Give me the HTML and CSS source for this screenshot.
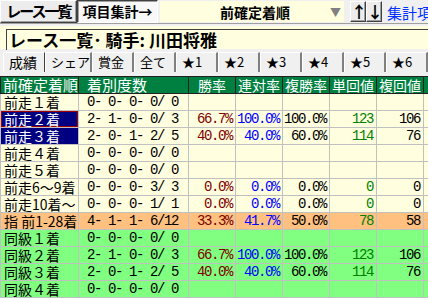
FILE: index.html
```html
<!DOCTYPE html>
<html lang="ja">
<head>
    <meta charset="UTF-8">
    <title>レース一覧・騎手</title>
    <link rel="stylesheet" href="styles.css">
</head>
<body>
    <div class="toolbar">
        <div class="btn btn-list">レース一覧</div>
        <div class="btn btn-sum">項目集計→</div>
        <div class="combo">
            <span class="combo-text">前確定着順</span>
            <span class="combo-arrow">▼</span>
        </div>
        <div class="btn btn-sort btn-up">↑</div>
        <div class="btn btn-sort">↓</div>
        <a class="link" href="#">集計項目設定</a>
    </div>

    <div class="title-panel">
        <div class="title-box">レース一覧･ 騎手: 川田将雅</div>
    </div>

    <div class="tabs">
        <div class="tab active">成績</div>
        <div class="tab">シェア</div>
        <div class="tab">賞金</div>
        <div class="tab">全て</div>
        <div class="tab">★1</div>
        <div class="tab">★2</div>
        <div class="tab">★3</div>
        <div class="tab">★4</div>
        <div class="tab">★5</div>
        <div class="tab">★6</div>
        <div class="tab">★7</div>
    </div>

    <table class="grid">
        <colgroup>
            <col class="c-label">
            <col class="c-count">
            <col class="c-num"><col class="c-num"><col class="c-num"><col class="c-num"><col class="c-num">
            <col class="c-num">
        </colgroup>
        <thead>
            <tr>
                <th class="h-label">前確定着順</th>
                <th class="h-count">着別度数</th>
                <th>勝率</th>
                <th>連対率</th>
                <th>複勝率</th>
                <th>単回値</th>
                <th>複回値</th>
                <th>単勝</th>
            </tr>
        </thead>
        <tbody>
            <tr>
                <td class="label">前走１着</td><td class="count"> 0- 0- 0- 0/ 0</td>
                <td></td><td></td><td></td><td></td><td></td><td></td>
            </tr>
            <tr>
                <td class="label sel focus">前走２着</td><td class="count"> 2- 1- 0- 0/ 3</td>
                <td class="win">66.7%</td><td class="ren">100.0%</td><td class="fuku">100.0%</td><td class="tan">123</td><td class="fkv">106</td><td></td>
            </tr>
            <tr>
                <td class="label sel">前走３着</td><td class="count"> 2- 0- 1- 2/ 5</td>
                <td class="win">40.0%</td><td class="ren">40.0%</td><td class="fuku">60.0%</td><td class="tan">114</td><td class="fkv">76</td><td></td>
            </tr>
            <tr>
                <td class="label">前走４着</td><td class="count"> 0- 0- 0- 0/ 0</td>
                <td></td><td></td><td></td><td></td><td></td><td></td>
            </tr>
            <tr>
                <td class="label">前走５着</td><td class="count"> 0- 0- 0- 0/ 0</td>
                <td></td><td></td><td></td><td></td><td></td><td></td>
            </tr>
            <tr>
                <td class="label">前走6～9着</td><td class="count"> 0- 0- 0- 3/ 3</td>
                <td class="win">0.0%</td><td class="ren">0.0%</td><td class="fuku">0.0%</td><td class="tan">0</td><td class="fkv">0</td><td></td>
            </tr>
            <tr>
                <td class="label">前走10着～</td><td class="count"> 0- 0- 0- 1/ 1</td>
                <td class="win">0.0%</td><td class="ren">0.0%</td><td class="fuku">0.0%</td><td class="tan">0</td><td class="fkv">0</td><td></td>
            </tr>
            <tr class="row-total">
                <td class="label">指 前1-28着</td><td class="count"> 4- 1- 1- 6/12</td>
                <td class="win">33.3%</td><td class="ren">41.7%</td><td class="fuku">50.0%</td><td class="tan">78</td><td class="fkv">58</td><td></td>
            </tr>
            <tr class="row-class">
                <td class="label">同級１着</td><td class="count"> 0- 0- 0- 0/ 0</td>
                <td></td><td></td><td></td><td></td><td></td><td></td>
            </tr>
            <tr class="row-class">
                <td class="label">同級２着</td><td class="count"> 2- 1- 0- 0/ 3</td>
                <td class="win">66.7%</td><td class="ren">100.0%</td><td class="fuku">100.0%</td><td class="tan">123</td><td class="fkv">106</td><td></td>
            </tr>
            <tr class="row-class">
                <td class="label">同級３着</td><td class="count"> 2- 0- 1- 2/ 5</td>
                <td class="win">40.0%</td><td class="ren">40.0%</td><td class="fuku">60.0%</td><td class="tan">114</td><td class="fkv">76</td><td></td>
            </tr>
            <tr class="row-class">
                <td class="label">同級４着</td><td class="count"> 0- 0- 0- 0/ 0</td>
                <td></td><td></td><td></td><td></td><td></td><td></td>
            </tr>
        </tbody>
    </table>
</body>
</html>
```

FILE: styles.css
```css
body {
    margin: 0;
    background-color: #f0f0f0;
    font-family: "Noto Sans CJK JP", sans-serif;
    overflow: hidden;
    width: 428px;
    height: 298px;
}
.toolbar {
    display: flex;
    align-items: flex-start;
    height: 23px;
    border-bottom: 1px solid #a0a0a0;
    white-space: nowrap;
    overflow: hidden;
}
.toolbar > * {
    flex-shrink: 0;
}
.btn {
    box-sizing: border-box;
    height: 23px;
    border: 1px solid;
    border-color: #ffffff #404040 #404040 #ffffff;
    box-shadow: inset -1px -1px 0 #a0a0a0;
    background-color: #ececec;
    font-weight: bold;
    font-size: 15px;
    line-height: 20px;
    text-align: center;
}
.btn-list {
    width: 77px;
    letter-spacing: -2px;
}
.btn-sum {
    width: 81px;
    font-size: 14px;
    border-color: #404040 #ffffff #ffffff #404040;
    box-shadow: inset 1px 1px 0 #a0a0a0;
    background-color: #f8f8f8;
}
.combo {
    box-sizing: border-box;
    width: 184px;
    height: 21px;
    margin-left: 2px;
    margin-top: 1px;
    background-color: #ffffe0;
    display: flex;
    align-items: center;
    padding-left: 60px;
    padding-right: 3px;
}
.combo-text {
    flex: 1;
    font-weight: bold;
    font-size: 14px;
}
.combo-arrow {
    color: #808080;
    font-size: 11px;
}
.btn-sort {
    width: 16px;
    height: 21px;
    margin-top: 1px;
    font-size: 16px;
    line-height: 18px;
}
.btn-up {
    margin-left: 6px;
}
.link {
    margin-left: 5px;
    margin-top: 2px;
    color: #0030ff;
    text-decoration: none;
    font-size: 15px;
}
.title-panel {
    margin-top: 2px;
    height: 23px;
    background-color: #ffffe0;
    padding: 3px 0 0 6px;
    box-sizing: border-box;
}
.title-box {
    height: 20px;
    border-top: 1px solid #404040;
    border-left: 1px solid #404040;
    padding-left: 2px;
    font-weight: bold;
    font-size: 17px;
    line-height: 19px;
    white-space: nowrap;
}
.tabs {
    display: flex;
    margin-top: 3px;
    padding-left: 3px;
    height: 20px;
    white-space: nowrap;
}
.tab {
    box-sizing: border-box;
    flex: 0 0 42px;
    height: 20px;
    border-top: 1px solid #ffffff;
    border-left: 1px solid #ffffff;
    border-right: 2px solid #808080;
    background-color: #f0f0f0;
    font-size: 13px;
    line-height: 18px;
    padding-left: 5px;
}
.tab.active {
    border-right: 1px solid #404040;
    font-size: 14px;
}
.grid {
    margin-top: 4px;
    border-collapse: collapse;
    table-layout: fixed;
    width: 470px;
}
.c-label {
    width: 78px;
}
.c-count {
    width: 110px;
}
.c-num {
    width: 47px;
}
.grid th {
    background-color: #008040;
    color: #ffffff;
    font-weight: normal;
    font-size: 14px;
    line-height: 16px;
    padding: 0;
    border: 1px solid #202020;
    white-space: nowrap;
    overflow: hidden;
}
.grid th.h-label {
    text-align: left;
    padding-left: 2px;
    font-size: 15px;
}
.grid th.h-count {
    text-align: left;
    padding-left: 8px;
    font-size: 15px;
}
.grid td {
    background-color: #ffffe0;
    border: 1px solid #c0c0c0;
    padding: 0 3px 0 0;
    height: 16px;
    line-height: 16px;
    font-family: "Liberation Mono", monospace;
    font-size: 14px;
    letter-spacing: -1.4px;
    text-align: right;
    white-space: nowrap;
    overflow: hidden;
}
.grid td.label {
    font-family: "Noto Sans CJK JP", sans-serif;
    font-size: 14px;
    letter-spacing: 0;
    text-align: left;
    padding: 0 0 0 3px;
}
.grid td.count {
    text-align: left;
    white-space: pre;
    padding-left: 1px;
}
.grid td.sel {
    background-color: #000080;
    color: #ffffff;
}
.grid td.focus {
    box-shadow: inset 0 0 0 1px #a00000;
}
.row-total td {
    background-color: #ffc080;
}
.row-class td {
    background-color: #80ff80;
}
.win {
    color: #800000;
}
.ren {
    color: #0000ff;
}
.fuku {
    color: #000000;
}
.tan {
    color: #008000;
}
.fkv {
    color: #000000;
}
```
